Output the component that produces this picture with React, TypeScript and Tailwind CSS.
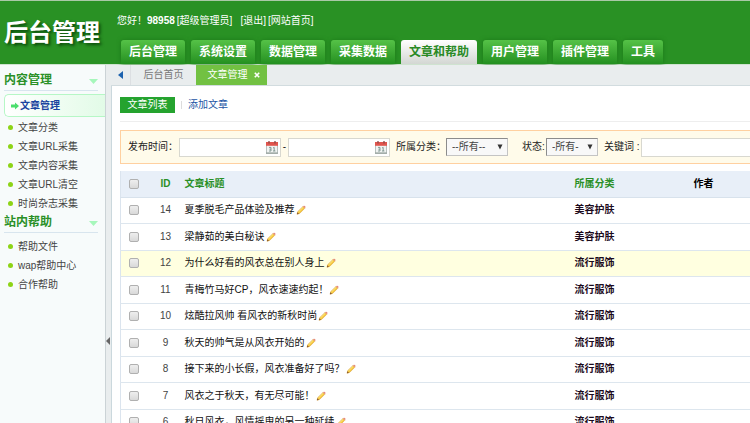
import React from "react";

const navItems = ["后台管理", "系统设置", "数据管理", "采集数据", "文章和帮助", "用户管理", "插件管理", "工具"];

const contentLinks = ["文章分类", "文章URL采集", "文章内容采集", "文章URL清空", "时尚杂志采集"];
const helpLinks = ["帮助文件", "wap帮助中心", "合作帮助"];

const articles = [
  { id: 14, title: "夏季脱毛产品体验及推荐", category: "美容护肤" },
  { id: 13, title: "梁静茹的美白秘诀", category: "美容护肤" },
  { id: 12, title: "为什么好看的风衣总在别人身上", category: "流行服饰" },
  { id: 11, title: "青梅竹马好CP，风衣速速约起！", category: "流行服饰" },
  { id: 10, title: "炫酷拉风帅 看风衣的新秋时尚", category: "流行服饰" },
  { id: 9, title: "秋天的帅气是从风衣开始的", category: "流行服饰" },
  { id: 8, title: "接下来的小长假，风衣准备好了吗？", category: "流行服饰" },
  { id: 7, title: "风衣之于秋天，有无尽可能！", category: "流行服饰" },
  { id: 6, title: "秋日风衣，风情摇曳的另一种延续", category: "流行服饰" },
];

function PencilIcon() {
  return (
    <svg viewBox="0 0 10 10" className="h-[10px] w-[10px]" aria-hidden="true">
      <path d="M1 9.3 1.8 6.6 7 1.5 8.8 3.3 3.6 8.5Z" fill="#f7c93c" stroke="#cf9436" strokeWidth="0.5" />
      <path d="M2.4 7 7.2 2.3" stroke="#fff0a0" strokeWidth="0.8" />
      <path d="M7 1.5 7.8.8Q8.6.5 9.2 1.2 9.8 2 9.4 2.6L8.8 3.3Z" fill="#e58a78" />
      <path d="M1 9.3 1.6 7.3 2.9 8.7Z" fill="#7a4a22" />
    </svg>
  );
}

function CalendarIcon() {
  return (
    <svg viewBox="0 0 12 13" className="h-[13px] w-3" aria-hidden="true">
      <rect x="0.5" y="1.5" width="11" height="10.5" fill="#f0f3f2" stroke="#a9b3b0" strokeWidth="0.8" />
      <rect x="0" y="1" width="12" height="3.8" fill="#e0554e" />
      <path d="M3 0v2.6M9 0v2.6" stroke="#8a4a48" strokeWidth="1.3" />
      <path d="M3 6.400h2v3.600H3M3.400 8.200H5M7 7 8.200 6.400v3.600M7 10h2.400" fill="none" stroke="#6d8580" strokeWidth="0.8" />
      <path d="M0 12.200h12" stroke="#8a9692" />
    </svg>
  );
}

function CheckBox({ label }: { label: string }) {
  return (
    <input
      type="checkbox"
      aria-label={label}
      className="block h-[10px] w-[10px] appearance-none rounded-[2px] border border-[#b0b0b0] bg-linear-to-b from-[#eeeeee] to-[#d9d9d9]"
    />
  );
}

function DateField({ label }: { label: string }) {
  return (
    <div className="flex h-[19px] w-[102px] items-center border border-[#d8d8d0] bg-white pr-[2px]">
      <input type="text" aria-label={label} className="h-full min-w-0 flex-1 outline-none" />
      <button type="button" aria-label="选择日期">
        <CalendarIcon />
      </button>
    </div>
  );
}

function SelectField({ id, text, width }: { id: string; text: string; width: string }) {
  return (
    <div className={`relative ${width}`}>
      <select
        id={id}
        className="block h-[18px] w-full appearance-none border border-[#c4c4c4] border-t-[#8c8c8c] border-l-[#8c8c8c] bg-[#f8f8f8] pl-[5px] text-[#444]"
      >
        <option>{text}</option>
      </select>
      <svg viewBox="0 0 6 6" className="pointer-events-none absolute top-[6px] right-[5px] h-[6px] w-[6px]" aria-hidden="true">
        <path d="M0.500 0.500h5L3 5.500Z" fill="#333" />
      </svg>
    </div>
  );
}

function MenuHeading({ title }: { title: string }) {
  return (
    <h2 className="mr-[7px] ml-1 flex h-[18px] items-start justify-between border-b border-[#d8e5ee] text-xs leading-[15px] font-bold text-[#2a9027]">
      {title}
      <svg viewBox="0 0 9 5" className="mt-[6px] h-[5px] w-[9px]" aria-hidden="true">
        <path d="M0 0h9L4.500 5Z" fill="#a6f7bb" />
      </svg>
    </h2>
  );
}

function MenuLinks({ links }: { links: string[] }) {
  return (
    <ul className="pl-2">
      {links.map((link) => (
        <li key={link} className="flex h-[19px] items-center gap-[5px]">
          <span className="h-[5px] w-[5px] rounded-full bg-[#8dd416]" />
          <a href="#" className="text-[#444]">{link}</a>
        </li>
      ))}
    </ul>
  );
}

function Header() {
  return (
    <header className="flex h-[65px] shrink-0 border-t border-b border-t-[#a9c9a6] border-b-[#cfe3d0] bg-[#299124]">
      <h1 className="w-[117px] shrink-0 pt-[14px] pl-1 text-2xl leading-9 font-bold whitespace-nowrap text-white [text-shadow:2px_2px_3px_#0b4a0b]">
        后台管理
      </h1>
      <div className="flex min-w-0 flex-1 flex-col justify-between pt-3">
        <p className="flex text-white">
          您好！<b>98958</b>
          <span className="ml-[2px]">[超级管理员]</span>
          <a href="#" className="ml-2">[退出]</a>
          <a href="#" className="ml-[2px]">[网站首页]</a>
        </p>
        <nav className="flex gap-[6px] pl-1">
          {navItems.map((item) => (
            <a
              key={item}
              href="#"
              className={
                item === "文章和帮助"
                  ? "h-6 rounded-t-[3px] bg-linear-to-b from-white to-[#d3d7d3] px-2 text-xs leading-6 font-bold whitespace-nowrap text-[#2a8a26]"
                  : "h-6 rounded-t-[3px] bg-linear-to-b from-[#55c247] to-[#239020] px-2 text-xs leading-6 font-bold whitespace-nowrap text-white shadow-[0_0_4px_#1b7a18]"
              }
            >
              {item}
            </a>
          ))}
        </nav>
      </div>
    </header>
  );
}

function Sidebar() {
  return (
    <aside className="w-[105px] shrink-0 bg-[#f7fbfb] pt-2">
      <MenuHeading title="内容管理" />
      <a
        href="#"
        className="mt-[3px] mb-[1px] ml-1 flex h-[23px] items-center gap-[1px] rounded-l-[5px] border border-r-0 border-[#b6f7c6] bg-linear-to-r from-white to-[#e2fbe7] pl-[6px] font-bold text-[#1a449f]"
      >
        <svg viewBox="0 0 8 8" className="h-2 w-2" aria-hidden="true">
          <path d="M0 2.500h4V0.500L8 4 4 7.500V5.500H0Z" fill="#4ade6c" />
        </svg>
        文章管理
      </a>
      <MenuLinks links={contentLinks} />
      <div className="pt-[2px] pb-1">
        <MenuHeading title="站内帮助" />
      </div>
      <MenuLinks links={helpLinks} />
    </aside>
  );
}

function TabBar() {
  return (
    <div className="flex h-[21px] shrink-0 border-b border-[#d2dcdf] bg-[#e9edee]">
      <button type="button" aria-label="向左滚动" className="flex w-5 items-center justify-center border-r border-[#dcdfe2]">
        <svg viewBox="0 0 5 8" className="h-2 w-[5px]" aria-hidden="true">
          <path d="M5 0v8L0 4Z" fill="#1c62ae" />
        </svg>
      </button>
      <a href="#" className="w-[65px] text-center leading-5 text-[#777]">后台首页</a>
      <div className="flex h-5 w-[71px] items-center justify-center gap-[6px] bg-[#72c142] pl-1 text-white">
        <a href="#">文章管理</a>
        <button type="button" aria-label="关闭标签">
          <svg viewBox="0 0 6 6" className="h-[6px] w-[6px]" aria-hidden="true">
            <path d="M0.800 0.800 5.200 5.200M5.200 0.800 0.800 5.200" stroke="white" strokeWidth="1.600" />
          </svg>
        </button>
      </div>
    </div>
  );
}

function FilterBar() {
  return (
    <form className="mt-2 flex h-[34px] items-center border border-r-0 border-[#ffd0a0] bg-[#fffbea] pl-[7px] whitespace-nowrap text-[#222]">
      <span className="w-[51px]">发布时间：</span>
      <DateField label="开始时间" />
      <span className="w-[7px] text-center">-</span>
      <DateField label="结束时间" />
      <label htmlFor="category" className="ml-[6px] w-[50px]">所属分类：</label>
      <SelectField id="category" text="--所有--" width="w-[62px]" />
      <label htmlFor="status" className="ml-[14px] w-[24px]">状态:</label>
      <SelectField id="status" text="-所有-" width="w-[52px]" />
      <label htmlFor="keyword" className="ml-[6px] w-[37px]">关键词 :</label>
      <input id="keyword" type="text" className="h-[19px] min-w-0 flex-1 border border-r-0 border-[#d8d8d0] bg-white px-1 outline-none" />
    </form>
  );
}

function ArticleTable() {
  return (
    <table className="mt-[7px] w-full table-fixed border-collapse border-l border-[#dbe4ee] text-left">
      <thead>
        <tr className="h-[26px] border-b border-[#d8e2ec] bg-[#e8eff8] text-[#2a9027]">
          <th className="w-[30px] pl-2"><CheckBox label="全选" /></th>
          <th className="w-[30px] text-center font-bold">ID</th>
          <th className="w-[394px] pl-1">文章标题</th>
          <th className="w-[119px]">所属分类</th>
          <th className="text-black">作者</th>
        </tr>
      </thead>
      <tbody>
        {articles.map((article) => (
          <tr
            key={article.id}
            className={`border-b border-[#dde6ee] odd:h-[26px] even:h-[27px] ${article.id === 12 ? "bg-[#ffffe0]" : "bg-white"}`}
          >
            <td className="pl-2"><CheckBox label={article.title} /></td>
            <td className="text-center text-[#444]">{article.id}</td>
            <td className="pl-1">
              <div className="flex items-center gap-[1px]">
                <a href="#" className="text-[#111]">{article.title}</a>
                <button type="button" aria-label="编辑"><PencilIcon /></button>
              </div>
            </td>
            <td className="font-bold text-[#1c0a1c]">{article.category}</td>
            <td></td>
          </tr>
        ))}
      </tbody>
    </table>
  );
}

export default function App() {
  return (
    <div className="flex h-screen flex-col overflow-hidden bg-white font-['Liberation_Sans','Noto_Sans_CJK_SC',sans-serif] text-[10px] leading-4">
      <Header />
      <div className="flex min-h-0 flex-1">
        <Sidebar />
        <div className="flex w-[6px] shrink-0 items-center border-l border-[#cbd3d6] bg-[#e9edee] pt-[194px]">
          <button type="button" aria-label="收起菜单">
            <svg viewBox="0 0 4 8" className="h-2 w-1" aria-hidden="true">
              <path d="M4 0v8L0 4Z" fill="#666" />
            </svg>
          </button>
        </div>
        <div className="flex min-w-0 flex-1 flex-col">
          <TabBar />
          <main className="min-h-0 flex-1 overflow-hidden border-l border-[#cbd8dd] pt-[11px] pl-2">
            <div className="flex items-center border-b border-[#eeeeee] pb-2">
              <a href="#" className="w-[55px] bg-[#25a32f] text-center text-white">文章列表</a>
              <span className="mx-[6px] h-2 w-px bg-[#dddddd]" />
              <a href="#" className="text-[#1c55a5]">添加文章</a>
            </div>
            <FilterBar />
            <ArticleTable />
          </main>
        </div>
      </div>
    </div>
  );
}
